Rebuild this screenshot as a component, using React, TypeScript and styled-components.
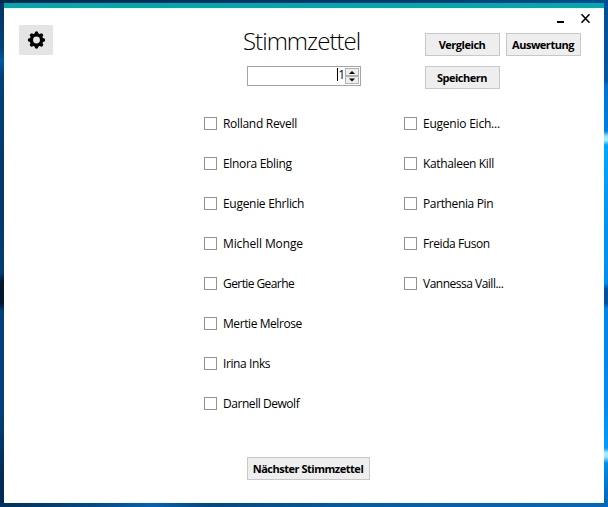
import React from 'react';
import styled, { createGlobalStyle } from 'styled-components';

const GlobalStyle = createGlobalStyle`
  * { box-sizing: border-box; }
  body { margin: 0; overflow: hidden; }
  button { font: inherit; }
`;

const Desktop = styled.div`
  display: grid;
  grid-template: 3px 500px 4px / 4px 600px 4px;
  width: 608px;
  height: 507px;
  font-family: 'Open Sans', 'Noto Sans', sans-serif;
  font-size: 12px;
  color: #000;
`;

const TopEdge = styled.div`
  grid-column: 1 / 4;
  background: linear-gradient(90deg, #00294f, #00305f 30%, #003c72 70%, #004d91);
`;

const LeftEdge = styled.div`
  background: linear-gradient(#003464 0, #00407c 45px, #0059a2 58px, #00407c 72px, #00386f 180px,
    #003c76 270px, #001730 278px, #001730 300px, #00407c 308px, #00407c 410px, #002c55 470px, #002b52);
`;

const RightEdge = styled.div`
  background: linear-gradient(#004f96 0, #0058a8 78px, #0072d2 82px, #0080e4 128px, #8fe4ff 133px,
    #b5efff 137px, #00a8ff 142px, #0094f2 220px, #008ff0 280px, #0050a0 286px, #0050a0 300px,
    #0086ea 306px, #008af0 400px, #009cff 445px, #b5ecff 450px, #9ce5ff 454px, #008fec 460px, #0065bd);
`;

const BottomEdge = styled.div`
  grid-column: 1 / 4;
  background: linear-gradient(90deg, #00305d, #004a8b 15%, #0062b6 25%, #004987 34%, #005dab 60%, #0067c1);
`;

const Window = styled.main`
  display: flex;
  flex-direction: column;
  background: #fff;
  border-top: 5px solid #00a9ad;
`;

const TitleBar = styled.div`
  height: 17px;
  padding: 5px 13px 0 0;
  display: flex;
  justify-content: flex-end;
  gap: 14px;
`;

const WindowControl = styled.button`
  display: block;
  width: 11px;
  height: 11px;
  padding: 0;
  border: 0;
  background: none;
  svg { display: block; }
`;

const Header = styled.header`
  display: grid;
  grid-template-columns: 34px 194px 114px 64px 156px;
  padding-left: 15px;
  height: 92px;
`;

const SettingsButton = styled.button`
  width: 34px;
  height: 30px;
  padding: 0;
  border: 0;
  background: #e4e4e4;
  svg { display: block; }
`;

const BallotHeading = styled.div`
  grid-column: 3;
  display: flex;
  flex-direction: column;
`;

const Title = styled.h1`
  margin: 0 0 0 -4px;
  height: 41px;
  font-size: 24px;
  line-height: 32px;
  font-weight: 300;
  white-space: nowrap;
`;

const NumberField = styled.div`
  display: flex;
  justify-content: flex-end;
  width: 114px;
  height: 20px;
  padding: 1px;
  border: 1px solid #a5a5a5;
`;

const NumberValue = styled.span`
  height: 13px;
  margin-right: 2px;
  border-left: 1px solid #000;
  color: #00003c;
  line-height: 14px;
  letter-spacing: -2px;
`;

const Stepper = styled.div`
  display: grid;
  grid-template-rows: 8px 8px;
  width: 14px;
`;

const StepButton = styled.button`
  display: block;
  padding: 0;
  border: 1px solid #b2b2b2;
  background: #eee;
  svg { display: block; }
`;

const Actions = styled.div`
  grid-column: 5;
  display: grid;
  grid-template-columns: 75px 75px;
  grid-template-rows: 23px 23px;
  gap: 10px 6px;
  padding-top: 8px;
`;

const Button = styled.button<{ $width?: number }>`
  width: ${p => p.$width ?? 75}px;
  height: 23px;
  padding: 0 1px 0 0;
  border: 1px solid #c8c8c8;
  background: #eee;
  color: #000;
  font-size: 11px;
  font-weight: 700;
  line-height: 21px;
  letter-spacing: -0.48px;
  white-space: nowrap;
`;

const Fit = styled.span<{ $spacing: number }>`
  letter-spacing: ${p => p.$spacing}px;
`;

const Candidates = styled.section`
  display: grid;
  grid-template-columns: 200px 200px;
  grid-template-rows: repeat(8, 40px);
  grid-auto-flow: column;
  padding-left: 200px;
`;

const Candidate = styled.label`
  display: flex;
  align-items: flex-start;
  gap: 6px;
  line-height: 14px;
  white-space: nowrap;
`;

const Checkbox = styled.input`
  appearance: none;
  flex: none;
  width: 13px;
  height: 13px;
  margin: 0;
  border: 1px solid #929292;
  background: #fff;
`;

const Footer = styled.footer`
  padding: 20px 0 0 243px;
`;

const left: [string, number][] = [
  ['Rolland Revell', -0.3], ['Elnora Ebling', -0.33], ['Eugenie Ehrlich', -0.3], ['Michell Monge', -0.12],
  ['Gertie Gearhe', -0.58], ['Mertie Melrose', -0.42], ['Irina Inks', -0.4], ['Darnell Dewolf', -0.45],
];
const right: [string, number][] = [
  ['Eugenio Eich...', -0.23], ['Kathaleen Kill', -0.35], ['Parthenia Pin', -0.37], ['Freida Fuson', -0.42],
  ['Vannessa Vaill...', -0.5],
];

const Gear = () => (
  <svg width="34" height="30" viewBox="-17.5 -15 34 30">
    <circle r="5.1" fill="none" stroke="#000" strokeWidth="3.3" />
    {[0, 45, 90, 135, 180, 225, 270, 315].map(a => (
      <path key={a} d="M-2.2-5.5L-1.5-8.1Q0-9.3 1.5-8.1L2.2-5.5Z" transform={`rotate(${a})`} />
    ))}
  </svg>
);

const renderCandidate = ([name, spacing]: [string, number]) => (
  <Candidate key={name}>
    <Checkbox type="checkbox" />
    <Fit $spacing={spacing}>{name}</Fit>
  </Candidate>
);

export default function App() {
  return (
    <>
      <GlobalStyle />
      <Desktop>
        <TopEdge />
        <LeftEdge />
        <Window>
          <TitleBar>
            <WindowControl aria-label="Minimieren">
              <svg width="11" height="11"><path d="M2 9h7" stroke="#000" strokeWidth="2" /></svg>
            </WindowControl>
            <WindowControl aria-label="Schließen">
              <svg width="11" height="11"><path d="M1.5 1.2l8 8.6M9.5 1.2l-8 8.6" stroke="#000" strokeWidth="1.6" /></svg>
            </WindowControl>
          </TitleBar>
          <Header>
            <SettingsButton aria-label="Einstellungen"><Gear /></SettingsButton>
            <BallotHeading>
              <Title><Fit $spacing={-0.97}>Stimmzettel</Fit></Title>
              <NumberField>
                <NumberValue>1</NumberValue>
                <Stepper>
                  <StepButton aria-label="Mehr">
                    <svg width="12" height="6"><path d="M3 5h6L6 2z" /></svg>
                  </StepButton>
                  <StepButton aria-label="Weniger">
                    <svg width="12" height="6"><path d="M3 1.5h6L6 4.5z" /></svg>
                  </StepButton>
                </Stepper>
              </NumberField>
            </BallotHeading>
            <Actions>
              <Button>Vergleich</Button>
              <Button>Auswertung</Button>
              <Button>Speichern</Button>
            </Actions>
          </Header>
          <Candidates>
            {left.map(renderCandidate)}
            {right.map(renderCandidate)}
          </Candidates>
          <Footer>
            <Button $width={123}>Nächster Stimmzettel</Button>
          </Footer>
        </Window>
        <RightEdge />
        <BottomEdge />
      </Desktop>
    </>
  );
}
